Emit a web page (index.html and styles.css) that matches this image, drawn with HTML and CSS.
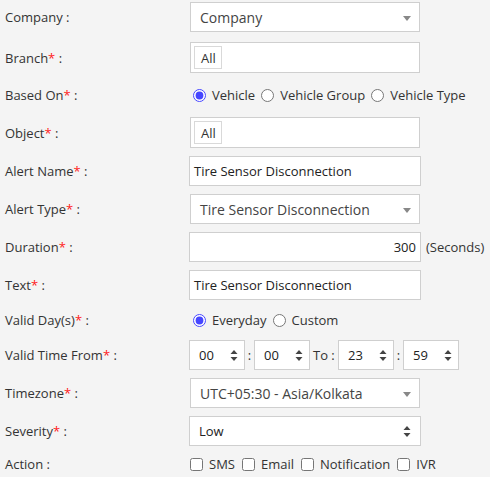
FILE: index.html
```html
<!DOCTYPE html>
<html>
<head>
<meta charset="utf-8">
<link rel="stylesheet" href="styles.css">
</head>
<body>
<div class="form">
  <div class="row r-first">
    <div class="label">Company :</div>
    <div class="field">
      <div class="sel2"><span>Company</span><span class="tri"></span></div>
    </div>
  </div>
  <div class="row">
    <div class="label">Branch<span class="req">*</span> :</div>
    <div class="field">
      <div class="multi"><span class="tag">All</span></div>
    </div>
  </div>
  <div class="row r-radio">
    <div class="label">Based On<span class="req">*</span> :</div>
    <div class="field opts">
      <label class="opt"><input type="radio" name="based" checked><span>Vehicle</span></label>
      <label class="opt"><input type="radio" name="based"><span>Vehicle Group</span></label>
      <label class="opt"><input type="radio" name="based"><span>Vehicle Type</span></label>
    </div>
  </div>
  <div class="row">
    <div class="label">Object<span class="req">*</span> :</div>
    <div class="field">
      <div class="multi"><span class="tag">All</span></div>
    </div>
  </div>
  <div class="row">
    <div class="label">Alert Name<span class="req">*</span> :</div>
    <div class="field">
      <div class="input">Tire Sensor Disconnection</div>
    </div>
  </div>
  <div class="row">
    <div class="label">Alert Type<span class="req">*</span> :</div>
    <div class="field">
      <div class="sel2"><span>Tire Sensor Disconnection</span><span class="tri"></span></div>
    </div>
  </div>
  <div class="row">
    <div class="label">Duration<span class="req">*</span> :</div>
    <div class="field dur">
      <div class="input right">300</div>
      <span class="unit">(Seconds)</span>
    </div>
  </div>
  <div class="row">
    <div class="label">Text<span class="req">*</span> :</div>
    <div class="field">
      <div class="input">Tire Sensor Disconnection</div>
    </div>
  </div>
  <div class="row r-radio2">
    <div class="label">Valid Day(s)<span class="req">*</span> :</div>
    <div class="field opts">
      <label class="opt"><input type="radio" name="day" checked><span>Everyday</span></label>
      <label class="opt"><input type="radio" name="day"><span>Custom</span></label>
    </div>
  </div>
  <div class="row">
    <div class="label">Valid Time From<span class="req">*</span> :</div>
    <div class="field time">
      <div class="spin"><span>00</span><svg class="ud" width="8" height="11" viewBox="0 0 8 11"><path d="M4 0 L7.5 4 L0.5 4 Z M0.5 7 L7.5 7 L4 11 Z" fill="#444"/></svg></div>
      <span class="sep">:</span>
      <div class="spin"><span>00</span><svg class="ud" width="8" height="11" viewBox="0 0 8 11"><path d="M4 0 L7.5 4 L0.5 4 Z M0.5 7 L7.5 7 L4 11 Z" fill="#444"/></svg></div>
      <span class="to">To :</span>
      <div class="spin"><span>23</span><svg class="ud" width="8" height="11" viewBox="0 0 8 11"><path d="M4 0 L7.5 4 L0.5 4 Z M0.5 7 L7.5 7 L4 11 Z" fill="#444"/></svg></div>
      <span class="sep">:</span>
      <div class="spin"><span>59</span><svg class="ud" width="8" height="11" viewBox="0 0 8 11"><path d="M4 0 L7.5 4 L0.5 4 Z M0.5 7 L7.5 7 L4 11 Z" fill="#444"/></svg></div>
    </div>
  </div>
  <div class="row">
    <div class="label">Timezone<span class="req">*</span> :</div>
    <div class="field">
      <div class="sel2"><span>UTC+05:30 - Asia/Kolkata</span><span class="tri"></span></div>
    </div>
  </div>
  <div class="row">
    <div class="label">Severity<span class="req">*</span> :</div>
    <div class="field">
      <div class="native"><span>Low</span><svg class="ud" width="8" height="11" viewBox="0 0 8 11"><path d="M4 0 L7.5 4 L0.5 4 Z M0.5 7 L7.5 7 L4 11 Z" fill="#444"/></svg></div>
    </div>
  </div>
  <div class="row r-check">
    <div class="label">Action :</div>
    <div class="field opts checks">
      <label class="opt"><input type="checkbox"><span>SMS</span></label>
      <label class="opt"><input type="checkbox"><span>Email</span></label>
      <label class="opt"><input type="checkbox"><span>Notification</span></label>
      <label class="opt"><input type="checkbox"><span>IVR</span></label>
    </div>
  </div>
</div>
</body>
</html>
```

FILE: styles.css
```css
html, body {
  margin: 0;
  padding: 0;
  background: #f4f4f4;
}
body {
  font-family: "Open Sans", "Liberation Sans", sans-serif;
  font-size: 13px;
  color: #333;
}
.form {
  display: flex;
  flex-direction: column;
  gap: 8px;
  padding: 2px 0 0 5px;
}
.row {
  display: flex;
  align-items: center;
}
.r-first {
  padding-bottom: 2px;
}
.r-radio {
  height: 28px;
}
.r-radio2 {
  height: 24px;
}
.r-check {
  height: 20px;
}
.label {
  width: 184px;
  flex: none;
  white-space: nowrap;
}
.req {
  color: #ff1a1a;
}
.field {
  display: flex;
  align-items: center;
}
.sel2 {
  box-sizing: border-box;
  width: 230px;
  height: 30px;
  margin-left: 1px;
  background: #fff;
  border: 1px solid #cfcfcf;
  display: flex;
  align-items: center;
  justify-content: space-between;
  padding: 0 8px 0 9px;
  font-size: 14px;
  color: #444;
}
.tri {
  width: 0;
  height: 0;
  border-left: 4px solid transparent;
  border-right: 4px solid transparent;
  border-top: 5px solid #888;
  margin-top: 2px;
}
.multi {
  box-sizing: border-box;
  width: 230px;
  height: 31px;
  margin-left: 1px;
  background: #fff;
  border: 1px solid #cfcfcf;
  display: flex;
  align-items: center;
  padding-left: 3px;
}
.tag {
  box-sizing: border-box;
  height: 23px;
  display: flex;
  align-items: center;
  padding: 0 5px 0 6px;
  border: 1px solid #d9d9d9;
  background: #fff;
  color: #333;
  font-size: 13px;
}
.input {
  box-sizing: border-box;
  width: 232px;
  height: 30px;
  background: #fff;
  border: 1px solid #cfcfcf;
  display: flex;
  align-items: center;
  padding: 0 4px;
  color: #222;
}
.input.right {
  justify-content: flex-end;
}
.unit {
  margin-left: 5px;
}
.opts {
  gap: 6px;
  padding-left: 4px;
}
.opt {
  display: flex;
  align-items: center;
  gap: 6px;
}
.opt input {
  margin: 0;
  width: 13px;
  height: 13px;
  accent-color: #4646ff;
}
.checks {
  padding-left: 1px;
  gap: 7px;
}
.time {
  gap: 0;
}
.spin {
  box-sizing: border-box;
  width: 56px;
  height: 30px;
  background: #fff;
  border: 1px solid #cfcfcf;
  display: flex;
  align-items: center;
  justify-content: space-between;
  padding: 0 6px 0 9px;
  color: #222;
}
.sep {
  width: 9px;
  text-align: center;
}
.to {
  box-sizing: border-box;
  width: 28px;
  padding-left: 3px;
}
.native {
  box-sizing: border-box;
  width: 232px;
  height: 30px;
  background: #fff;
  border: 1px solid #cfcfcf;
  display: flex;
  align-items: center;
  justify-content: space-between;
  padding: 0 9px 0 9px;
  color: #222;
}
.ud {
  display: block;
}
```
